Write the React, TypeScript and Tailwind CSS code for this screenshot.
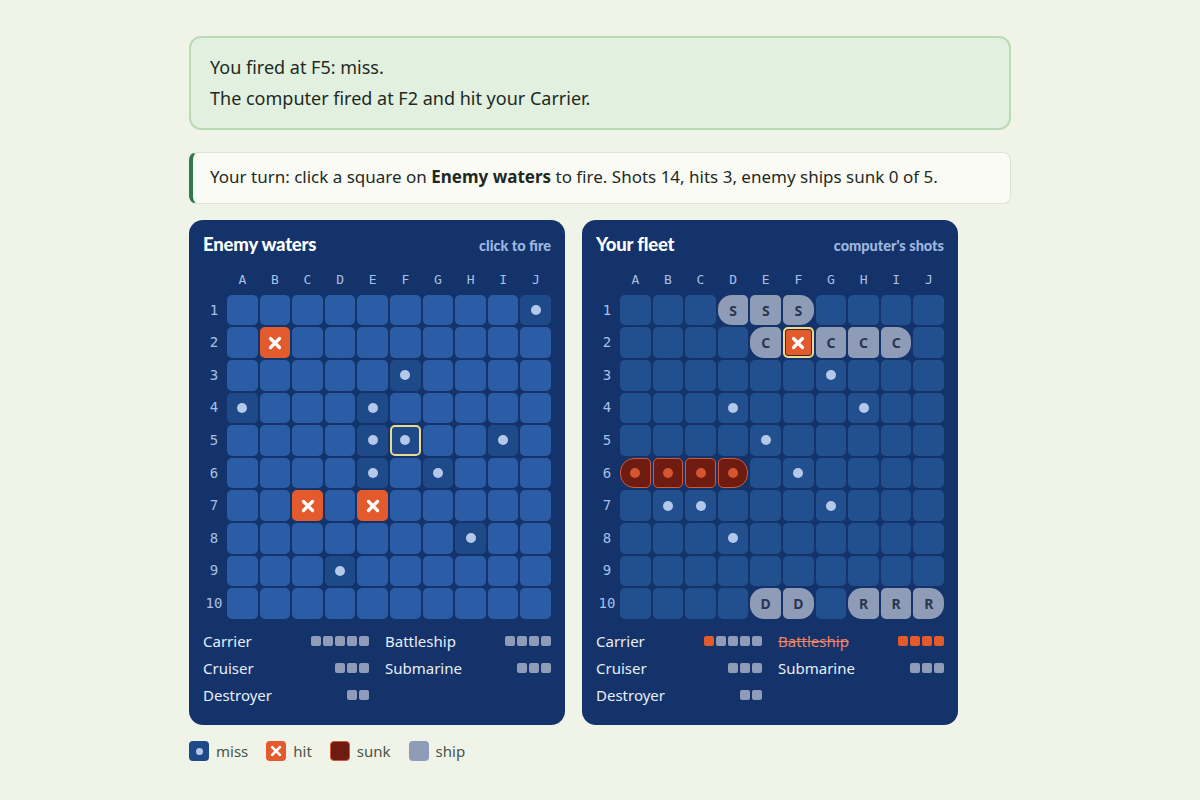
import React from 'react'

type Cell = {
  kind: 'water' | 'miss' | 'hit' | 'ship' | 'sunk'
  letter?: string
  end?: 'l' | 'r'
  last?: boolean
}

const COLS = ['A', 'B', 'C', 'D', 'E', 'F', 'G', 'H', 'I', 'J']
const ROWS = [1, 2, 3, 4, 5, 6, 7, 8, 9, 10]

const makeGrid = (): Cell[][] =>
  ROWS.map(() => COLS.map(() => ({ kind: 'water' as const })))

const at = (pos: string) => {
  const c = COLS.indexOf(pos[0])
  const r = parseInt(pos.slice(1)) - 1
  return [r, c] as const
}

// enemy waters
const enemy = makeGrid()
;['J1', 'F3', 'A4', 'E4', 'E5', 'F5', 'I5', 'E6', 'G6', 'H8', 'D9'].forEach((p) => {
  const [r, c] = at(p)
  enemy[r][c] = { kind: 'miss' }
})
;['B2', 'C7', 'E7'].forEach((p) => {
  const [r, c] = at(p)
  enemy[r][c] = { kind: 'hit' }
})
enemy[4][5].last = true

// your fleet
const fleet = makeGrid()
const placeShip = (cells: string[], letter: string, sunk = false) => {
  cells.forEach((p, i) => {
    const [r, c] = at(p)
    fleet[r][c] = {
      kind: sunk ? 'sunk' : 'ship',
      letter,
      end: i === 0 ? 'l' : i === cells.length - 1 ? 'r' : undefined,
    }
  })
}
placeShip(['D1', 'E1', 'F1'], 'S')
placeShip(['E2', 'F2', 'G2', 'H2', 'I2'], 'C')
placeShip(['A6', 'B6', 'C6', 'D6'], 'B', true)
placeShip(['E10', 'F10'], 'D')
placeShip(['H10', 'I10', 'J10'], 'R')
;['G3', 'D4', 'H4', 'E5', 'F6', 'B7', 'C7', 'G7', 'D8'].forEach((p) => {
  const [r, c] = at(p)
  fleet[r][c] = { kind: 'miss' }
})
fleet[1][5] = { kind: 'hit', end: undefined, last: true }

const HitX = ({ size = 14 }: { size?: number }) => (
  <svg width={size} height={size} viewBox="0 0 14 14">
    <path d="M2.5 2.5 L11.5 11.5 M11.5 2.5 L2.5 11.5" stroke="#fff" strokeWidth="3.2" strokeLinecap="round" />
  </svg>
)

const Square = ({ cell, enemySide }: { cell: Cell; enemySide: boolean }) => {
  const endCls = cell.end === 'l' ? 'rounded-l-[14px]' : cell.end === 'r' ? 'rounded-r-[14px]' : ''
  const water = enemySide ? 'bg-[#2b5da6]' : 'bg-[#22508f]'
  let cls = ''
  let inner: React.ReactNode = null
  if (cell.kind === 'water') cls = water
  if (cell.kind === 'miss') {
    cls = enemySide ? 'bg-[#1f4a8a]' : 'bg-[#22508f]'
    inner = <span className="w-[10px] h-[10px] rounded-full bg-[#b4c9ea]" />
  }
  if (cell.kind === 'hit') {
    cls = 'bg-[#e35a2c]'
    inner = <HitX />
  }
  if (cell.kind === 'ship') {
    cls = 'bg-[#8f9cb8] text-[#2b3650] font-bold text-[14px]'
    inner = cell.letter
  }
  if (cell.kind === 'sunk') {
    cls = 'bg-[#6e1c12] border border-[#d2583a]'
    inner = <span className="w-[10px] h-[10px] rounded-full bg-[#d4552f]" />
  }
  const lastCls = cell.last
    ? cell.kind === 'hit'
      ? 'border-2 border-[#ecdb8c] shadow-[inset_0_0_0_1px_#3b2b1f]'
      : 'border-2 border-[#ecdb8c]'
    : ''
  return (
    <div
      className={`aspect-square rounded-[5px] flex items-center justify-center ${cls} ${endCls} ${lastCls}`}
      style={{ fontFamily: '"Noto Sans", sans-serif' }}
    >
      {inner}
    </div>
  )
}

type Ship = { name: string; size: number; hits: number; sunk?: boolean }

const Pips = ({ ship }: { ship: Ship }) => (
  <div className="flex gap-[1.5px]">
    {Array.from({ length: ship.size }).map((_, i) => (
      <span
        key={i}
        className={`w-[10.5px] h-[10px] rounded-[2px] ${i < ship.hits ? 'bg-[#e35a2c]' : 'bg-[#8f9cb8]'}`}
      />
    ))}
  </div>
)

const Board = ({
  title,
  note,
  grid,
  enemySide,
  ships,
}: {
  title: string
  note: string
  grid: Cell[][]
  enemySide: boolean
  ships: Ship[]
}) => (
  <div className="w-[376px] bg-[#13336a] rounded-[14px] px-[14px] pt-[11px] pb-[16px]">
    <div className="flex items-baseline justify-between">
      <h2 className="text-white text-[18.5px] font-black tracking-[-0.2px]" style={{ fontFamily: '"Lato", sans-serif' }}>
        {title}
      </h2>
      <span className="text-[#9fb7e0] text-[14.5px] font-black" style={{ fontFamily: '"Lato", sans-serif' }}>
        {note}
      </span>
    </div>
    <div
      className="mt-[12px] grid gap-[2px] grid-cols-[22px_repeat(10,1fr)]"
      style={{ fontFamily: '"DejaVu Sans Mono", monospace' }}
    >
      <div />
      {COLS.map((c) => (
        <div key={c} className="text-center text-[13px] text-[#a8c0e6] h-[22px] leading-[18px]">
          {c}
        </div>
      ))}
      {grid.map((row, r) => (
        <React.Fragment key={r}>
          <div className="flex items-center justify-center text-[14px] text-[#a8c0e6]">{r + 1}</div>
          {row.map((cell, c) => (
            <Square key={c} cell={cell} enemySide={enemySide} />
          ))}
        </React.Fragment>
      ))}
    </div>
    <div className="mt-[9px] grid grid-cols-2 gap-x-[16px]">
      {ships.map((s) => (
        <div key={s.name} className="flex items-center justify-between h-[27px]">
          <span className={`text-[15px] ${s.sunk ? 'line-through text-[#ee8467]' : 'text-[#e8eef8]'}`}>{s.name}</span>
          <Pips ship={s} />
        </div>
      ))}
    </div>
  </div>
)

const LegendItem = ({ swatch, label }: { swatch: React.ReactNode; label: string }) => (
  <div className="flex items-center gap-[7px]">
    {swatch}
    <span className="text-[15px] text-[#485548]">{label}</span>
  </div>
)

export default function App() {
  const enemyShips: Ship[] = [
    { name: 'Carrier', size: 5, hits: 0 },
    { name: 'Battleship', size: 4, hits: 0 },
    { name: 'Cruiser', size: 3, hits: 0 },
    { name: 'Submarine', size: 3, hits: 0 },
    { name: 'Destroyer', size: 2, hits: 0 },
  ]
  const myShips: Ship[] = [
    { name: 'Carrier', size: 5, hits: 1 },
    { name: 'Battleship', size: 4, hits: 4, sunk: true },
    { name: 'Cruiser', size: 3, hits: 0 },
    { name: 'Submarine', size: 3, hits: 0 },
    { name: 'Destroyer', size: 2, hits: 0 },
  ]

  return (
    <div className="min-h-screen bg-[#eff3e8] pt-[36px]" style={{ fontFamily: '"Noto Sans", sans-serif' }}>
      <div className="w-[822px] mx-auto">
        <div className="bg-[#e1f0df] border-2 border-[#b9dbb4] rounded-[12px] px-[19px] py-[14px] text-[18px] leading-[31px] text-[#1e2a1f]">
          <p>You fired at F5: miss.</p>
          <p>The computer fired at F2 and hit your Carrier.</p>
        </div>

        <div className="mt-[22px] bg-[#fbfbf5] border border-[#dde4d6] border-l-[4px] border-l-[#2e7a4c] rounded-[8px] h-[52px] flex items-center pl-[17px] text-[17px] text-[#1e2a1f]">
          <p className="-mt-[2px]">
            Your turn: click a square on <b>Enemy waters</b> to fire. Shots 14, hits 3, enemy ships sunk 0 of 5.
          </p>
        </div>

        <div className="mt-[16px] flex gap-[17px]">
          <Board title="Enemy waters" note="click to fire" grid={enemy} enemySide ships={enemyShips} />
          <Board title="Your fleet" note="computer's shots" grid={fleet} enemySide={false} ships={myShips} />
        </div>

        <div className="mt-[15px] flex items-center gap-[18px]">
          <LegendItem
            label="miss"
            swatch={
              <span className="w-[20px] h-[20px] rounded-[4px] bg-[#1f4a8a] flex items-center justify-center">
                <span className="w-[7px] h-[7px] rounded-full bg-[#b4c9ea]" />
              </span>
            }
          />
          <LegendItem
            label="hit"
            swatch={
              <span className="w-[20px] h-[20px] rounded-[4px] bg-[#e35a2c] flex items-center justify-center">
                <HitX size={12} />
              </span>
            }
          />
          <LegendItem
            label="sunk"
            swatch={<span className="w-[20px] h-[20px] rounded-[4px] bg-[#6e1c12] border border-[#d2583a]" />}
          />
          <LegendItem label="ship" swatch={<span className="w-[20px] h-[20px] rounded-[4px] bg-[#8f9cb8]" />} />
        </div>
      </div>
    </div>
  )
}
